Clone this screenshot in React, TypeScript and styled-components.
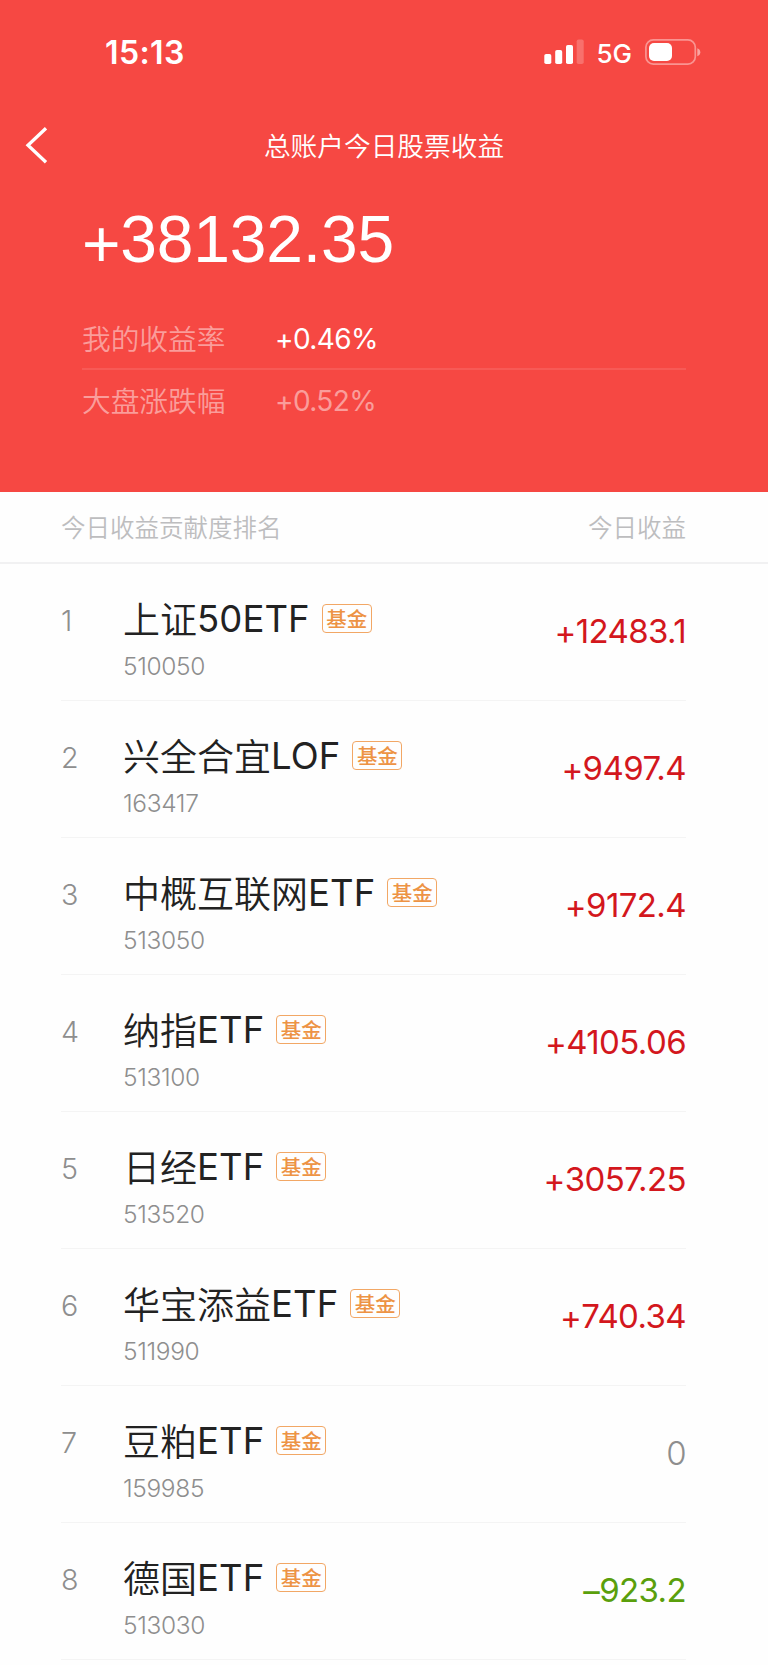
import React from "react";
import styled, { createGlobalStyle } from "styled-components";

const GlobalStyle = createGlobalStyle`
  * { box-sizing: border-box; }
  body {
    margin: 0;
    background: #fefefe;
    font-family: Inter, "Noto Sans CJK SC", sans-serif;
    -webkit-font-smoothing: antialiased;
  }
`;

const Page = styled.div`
  width: 768px;
  height: 1665px;
  overflow: hidden;
  background: #fefefe;
`;

const Hero = styled.header`
  display: flex;
  flex-direction: column;
  height: 492px;
  background: #f64843;
  color: #fff;
`;

const StatusBar = styled.div`
  display: flex;
  align-items: center;
  justify-content: space-between;
  height: 104px;
  padding: 0 67px 0 105px;
`;

const Clock = styled.span`
  padding-top: 2px;
  font-size: 32px;
  font-weight: 600;
  line-height: 40px;
  letter-spacing: 0.4px;
`;

const StatusIcons = styled.div`
  display: flex;
  align-items: center;
`;

const Network = styled.span`
  margin: 3px 13px 0 12px;
  font-size: 26px;
  font-weight: 450;
  line-height: 32px;
`;

const NavBar = styled.nav`
  display: grid;
  grid-template-columns: 80px 1fr 80px;
  align-items: center;
  height: 82px;
`;

const BackButton = styled.button`
  display: flex;
  padding: 0 0 0 24px;
  border: 0;
  background: none;
  color: inherit;
`;

const Title = styled.h1`
  margin: 0;
  text-align: center;
  font-family: "Noto Sans CJK SC", sans-serif;
  font-size: 26.7px;
  font-weight: 350;
  line-height: 40px;
`;

const Sign = styled.span<{ $drop: number }>`
  vertical-align: -${(p) => p.$drop}px;
  line-height: 1;
`;

const Total = styled.div`
  height: 91px;
  padding: 15px 0 0 82px;
  font-family: "Liberation Sans", Arial, sans-serif;
  font-size: 66px;
  line-height: 76px;
  letter-spacing: -0.2px;
`;

const Rates = styled.dl`
  margin: 31px 82px 0;
`;

const Rate = styled.div<{ $muted?: boolean }>`
  display: flex;
  align-items: center;
  height: ${(p) => (p.$muted ? 60 : 62)}px;
  border-bottom: ${(p) => (p.$muted ? "0" : "2px solid rgba(255, 255, 255, 0.1)")};
`;

const RateLabel = styled.dt`
  width: 193px;
  padding-bottom: 2px;
  font-family: "Noto Sans CJK SC", sans-serif;
  font-size: 28.7px;
  font-weight: 350;
  color: rgba(255, 255, 255, 0.47);
`;

const RateValue = styled.dd<{ $muted?: boolean }>`
  margin: 0;
  padding-top: 1px;
  font-size: 28px;
  line-height: 34px;
  font-weight: 370;
  letter-spacing: -0.6px;
  color: ${(p) => (p.$muted ? "rgba(255, 255, 255, 0.47)" : "#fff")};
`;

const ListHead = styled.div`
  display: flex;
  align-items: center;
  justify-content: space-between;
  height: 72px;
  padding: 0 82px 2px 61px;
  border-bottom: 2px solid #f1f1f2;
  font-family: "Noto Sans CJK SC", sans-serif;
  font-size: 24.5px;
  font-weight: 350;
  color: #bdbdbf;
`;

const List = styled.ol`
  margin: 0;
  padding: 0 82px 0 61px;
  list-style: none;
`;

const Row = styled.li`
  display: grid;
  grid-template-columns: 62px 1fr auto;
  height: 137.05px;
  border-bottom: 1px solid #f4f4f4;
`;

const Rank = styled.span`
  padding-top: 41px;
  font-size: 28.7px;
  font-weight: 340;
  line-height: 32px;
  color: #8e8e8e;
`;

const Fund = styled.div`
  padding-top: 28px;
`;

const FundTitle = styled.div`
  display: flex;
  align-items: center;
  height: 54px;
  color: #222;
`;

const NameText = styled.span`
  padding-bottom: 3px;
  font-family: "Noto Sans CJK SC", sans-serif;
  font-size: 37px;
  font-weight: 350;
  line-height: 54px;
`;

const NameLatin = styled.span`
  font-family: Inter, sans-serif;
  font-size: 36.5px;
  font-weight: 370;
  letter-spacing: 0.1px;
`;

const Tag = styled.span`
  display: flex;
  align-items: center;
  justify-content: center;
  width: 50px;
  height: 29px;
  margin: 0 0 1px 12px;
  padding-bottom: 1px;
  border: 1.4px solid #f2a765;
  border-radius: 4px;
  font-family: "Noto Sans CJK SC", sans-serif;
  font-size: 20.5px;
  font-weight: 500;
  line-height: 25px;
  color: #ed9344;
`;

const Code = styled.div`
  margin-top: 4px;
  font-size: 24.5px;
  font-weight: 340;
  line-height: 32px;
  letter-spacing: -0.35px;
  color: #8e8e8e;
`;

const colors = { up: "#d3171d", down: "#5a9f0c", flat: "#8e8e8e" };

const Profit = styled.span<{ $trend: keyof typeof colors }>`
  padding-top: 47px;
  font-size: 33px;
  font-weight: ${(p) => (p.$trend === "flat" ? 320 : 370)};
  line-height: 40px;
  letter-spacing: -0.6px;
  color: ${(p) => colors[p.$trend]};
`;

type Holding = {
  name: string;
  latin: string;
  code: string;
  sign: string;
  amount: string;
  trend: keyof typeof colors;
};

const holdings: Holding[] = [
  { name: "上证", latin: "50ETF", code: "510050", sign: "+", amount: "12483.1", trend: "up" },
  { name: "兴全合宜", latin: "LOF", code: "163417", sign: "+", amount: "9497.4", trend: "up" },
  { name: "中概互联网", latin: "ETF", code: "513050", sign: "+", amount: "9172.4", trend: "up" },
  { name: "纳指", latin: "ETF", code: "513100", sign: "+", amount: "4105.06", trend: "up" },
  { name: "日经", latin: "ETF", code: "513520", sign: "+", amount: "3057.25", trend: "up" },
  { name: "华宝添益", latin: "ETF", code: "511990", sign: "+", amount: "740.34", trend: "up" },
  { name: "豆粕", latin: "ETF", code: "159985", sign: "", amount: "0", trend: "flat" },
  { name: "德国", latin: "ETF", code: "513030", sign: "–", amount: "923.2", trend: "down" },
];

const Signal = () => (
  <svg width="40" height="26" viewBox="0 0 40 26" fill="#fff">
    <rect x="0.3" y="15" width="7" height="10" rx="1.8" />
    <rect x="11.2" y="11" width="7" height="14" rx="1.8" />
    <rect x="22" y="6" width="7" height="19" rx="1.8" />
    <rect x="32.7" y="0.5" width="7" height="24.5" rx="1.8" opacity="0.22" />
  </svg>
);

const Battery = () => (
  <svg width="56" height="26" viewBox="0 0 56 26" fill="none">
    <rect x="0.9" y="0.9" width="49.4" height="24.2" rx="7.4" stroke="#fff" strokeOpacity="0.42" strokeWidth="1.7" />
    <rect x="4" y="4" width="23" height="18" rx="5" fill="#fff" />
    <path d="M52.3 9.2c4 1.2 4 6.8 0 8z" fill="#fff" fillOpacity="0.5" />
  </svg>
);

export default function App() {
  return (
    <Page>
      <GlobalStyle />
      <Hero>
        <StatusBar>
          <Clock>15:13</Clock>
          <StatusIcons>
            <Signal />
            <Network>5G</Network>
            <Battery />
          </StatusIcons>
        </StatusBar>
        <NavBar>
          <BackButton aria-label="返回">
            <svg width="26" height="38" viewBox="0 0 26 38" fill="none" stroke="#fff" strokeWidth="3.3">
              <path d="M22 2.2L4 19.2l18 17" />
            </svg>
          </BackButton>
          <Title>总账户今日股票收益</Title>
        </NavBar>
        <Total>
          <Sign $drop={5}>+</Sign>38132.35
        </Total>
        <Rates>
          <Rate>
            <RateLabel>我的收益率</RateLabel>
            <RateValue>
              <Sign $drop={0}>+</Sign>0.46%
            </RateValue>
          </Rate>
          <Rate $muted>
            <RateLabel>大盘涨跌幅</RateLabel>
            <RateValue $muted>
              <Sign $drop={0}>+</Sign>0.52%
            </RateValue>
          </Rate>
        </Rates>
      </Hero>
      <ListHead>
        <span>今日收益贡献度排名</span>
        <span>今日收益</span>
      </ListHead>
      <List>
        {holdings.map((h, i) => (
          <Row key={h.code}>
            <Rank>{i + 1}</Rank>
            <Fund>
              <FundTitle>
                <NameText>{h.name}</NameText>
                <NameLatin>{h.latin}</NameLatin>
                <Tag>基金</Tag>
              </FundTitle>
              <Code>{h.code}</Code>
            </Fund>
            <Profit $trend={h.trend}>
              {h.sign && <Sign $drop={1}>{h.sign}</Sign>}
              {h.amount}
            </Profit>
          </Row>
        ))}
      </List>
    </Page>
  );
}
